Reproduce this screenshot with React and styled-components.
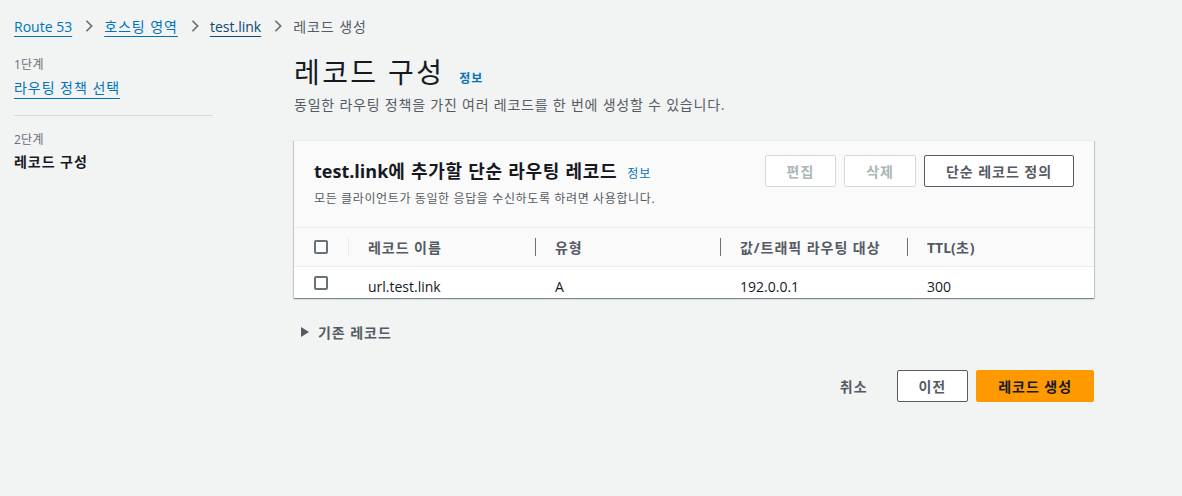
import React from "react";
import styled, { createGlobalStyle } from "styled-components";

const Global = createGlobalStyle`
  html, body { margin: 0; padding: 0; background: #f2f3f3; }
  body { font-family: "Noto Sans CJK KR", "Open Sans", sans-serif; color: #16191f; }
  * { box-sizing: border-box; }
`;

const Page = styled.div`
  width: 1182px;
  height: 496px;
  background: #f2f3f3;
  font-family: "Open Sans", "Noto Sans CJK KR", sans-serif;
  letter-spacing: 0.06em;
  overflow: hidden;
`;

const Latin = styled.span`
  letter-spacing: 0;
`;

const Crumbs = styled.nav`
  display: flex;
  align-items: center;
  height: 52px;
  padding: 0 0 0 14px;
  font-size: 14px;
`;

const CrumbLink = styled.a`
  color: ${(p) => (p.$dark ? "#0a4a74" : "#0073bb")};
  text-decoration: underline;
  text-underline-offset: 4px;
  text-decoration-thickness: 1px;
`;

const CrumbCurrent = styled.span`
  color: #545b64;
`;

const Chevron = styled.svg`
  width: 14px;
  height: 14px;
  margin: 0 8px 0 10px;
  flex-shrink: 0;
`;

const Body = styled.div`
  display: grid;
  grid-template-columns: 294px 800px;
`;

const Side = styled.aside`
  padding: 4px 0 0 14px;
  width: 213px;
`;

const StepLabel = styled.div`
  font-size: 12px;
  color: #687078;
  line-height: 18px;
  letter-spacing: 0.02em;
`;

const StepLink = styled.a`
  display: inline-block;
  font-size: 14px;
  color: #0073bb;
  text-decoration: underline;
  text-underline-offset: 5px;
  margin-top: 3px;
  line-height: 22px;
`;

const StepCurrent = styled.div`
  font-size: 14px;
  font-weight: 700;
  margin-top: 2px;
  line-height: 22px;
`;

const Divider = styled.hr`
  border: none;
  border-top: 1px solid #d5dbdb;
  margin: 16px 0 15px;
  width: 199px;
`;

const Main = styled.main``;

const TitleRow = styled.div`
  display: flex;
  align-items: baseline;
  gap: 15px;
  height: 42px;
`;

const Title = styled.h1`
  margin: 0;
  font-size: 28px;
  font-weight: 400;
  line-height: 40px;
  letter-spacing: 0.085em;
  color: #16191f;
`;

const Info = styled.a`
  font-size: 12px;
  font-weight: ${(p) => (p.$regular ? 400 : 700)};
  color: #0073bb;
  text-decoration: none;
`;

const Subtitle = styled.p`
  margin: 0;
  font-size: 14px;
  color: #545b64;
  line-height: 22px;
  letter-spacing: 0.056em;
`;

const Card = styled.section`
  margin-top: 24px;
  background: #fff;
  box-shadow: 0 1px 1px 0 rgba(0, 28, 36, 0.3), 1px 1px 1px 0 rgba(0, 28, 36, 0.15),
    -1px 1px 1px 0 rgba(0, 28, 36, 0.15);
  border-top: 1px solid #eaeded;
`;

const CardHead = styled.header`
  display: flex;
  justify-content: space-between;
  align-items: flex-start;
  background: #fafafa;
  padding: 14px 20px 0 20px;
  height: 87px;
  border-bottom: 1px solid #eaeded;
`;

const CardTitleRow = styled.div`
  display: flex;
  align-items: baseline;
  gap: 10px;
  margin-top: 3px;
`;

const CardTitle = styled.h2`
  margin: 0;
  font-size: 18px;
  font-weight: 700;
  line-height: 26px;
  letter-spacing: 0.04em;
`;

const CardDesc = styled.p`
  margin: 6px 0 0;
  font-size: 12px;
  color: #545b64;
  line-height: 18px;
  letter-spacing: 0.052em;
`;

const Actions = styled.div`
  display: flex;
  gap: 8px;
`;

const Button = styled.button`
  height: 32px;
  padding: 0 21px;
  background: #fff;
  font-family: inherit;
  letter-spacing: inherit;
  font-size: 14px;
  font-weight: 700;
  border-radius: 2px;
  border: 1px solid ${(p) => (p.$disabled ? "#d5dbdb" : "#545b64")};
  color: ${(p) => (p.$disabled ? "#aab7b8" : "#545b64")};
  cursor: pointer;
`;

const Table = styled.div`
  width: 100%;
`;

const Row = styled.div`
  display: grid;
  grid-template-columns: 54px 187px 185px 187px 1fr;
  align-items: center;
  height: ${(p) => (p.$head ? 39 : 31)}px;
  background: ${(p) => (p.$head ? "#fafafa" : "#fff")};
  border-bottom: ${(p) => (p.$head ? "1px solid #eaeded" : "none")};
  font-size: 14px;
  color: ${(p) => (p.$head ? "#545b64" : "#16191f")};
  font-weight: ${(p) => (p.$head ? 700 : 400)};
`;

const Cell = styled.div`
  position: relative;
  padding-left: 20px;
  height: 100%;
  display: flex;
  align-items: ${(p) => (p.$top ? "flex-start" : "center")};
  padding-top: ${(p) => (p.$top ? 10 : 0)}px;
  letter-spacing: ${(p) => (p.$top ? 0 : "inherit")};
  &::before {
    content: "";
    display: ${(p) => (p.$sep ? "block" : "none")};
    position: absolute;
    left: 0;
    top: 10px;
    bottom: 10px;
    width: 1px;
    background: ${(p) => (p.$sepLight ? "#eaeded" : "#687078")};
  }
`;

const CheckCell = styled.div`
  padding-left: 20px;
  height: 100%;
  display: flex;
  align-items: ${(p) => (p.$top ? "flex-start" : "center")};
  padding-top: ${(p) => (p.$top ? 9 : 0)}px;
`;

const Checkbox = styled.span`
  width: 14px;
  height: 14px;
  border: 2px solid #687078;
  border-radius: 2px;
  background: #fff;
`;

const Expander = styled.div`
  display: flex;
  align-items: center;
  gap: 8px;
  margin-top: 24px;
  padding-left: 6px;
  font-size: 14px;
  font-weight: 700;
  color: #545b64;
`;

const Footer = styled.div`
  display: flex;
  justify-content: flex-end;
  align-items: center;
  gap: 8px;
  margin-top: 28px;
`;

const TextButton = styled.button`
  background: none;
  border: none;
  font-family: inherit;
  letter-spacing: inherit;
  font-size: 14px;
  font-weight: 700;
  color: #545b64;
  padding: 0 20px;
  height: 32px;
  margin-right: 1px;
`;

const Primary = styled.button`
  height: 32px;
  padding: 0 21px;
  background: #ff9900;
  border: 1px solid #ff9900;
  border-radius: 2px;
  font-family: inherit;
  letter-spacing: inherit;
  font-size: 14px;
  font-weight: 700;
  color: #16191f;
`;

const ChevronIcon = () => (
  <Chevron viewBox="0 0 16 16">
    <path d="M5 2l6 6-6 6" fill="none" stroke="#687078" strokeWidth="2" />
  </Chevron>
);

export default function App() {
  return (
    <Page>
      <Global />
      <Crumbs>
        <CrumbLink href="#"><Latin>Route 53</Latin></CrumbLink>
        <ChevronIcon />
        <CrumbLink href="#">호스팅 영역</CrumbLink>
        <ChevronIcon />
        <CrumbLink href="#" $dark><Latin>test.link</Latin></CrumbLink>
        <ChevronIcon />
        <CrumbCurrent>레코드 생성</CrumbCurrent>
      </Crumbs>
      <Body>
        <Side>
          <StepLabel>1단계</StepLabel>
          <StepLink href="#">라우팅 정책 선택</StepLink>
          <Divider />
          <StepLabel>2단계</StepLabel>
          <StepCurrent>레코드 구성</StepCurrent>
        </Side>
        <Main>
          <TitleRow>
            <Title>레코드 구성</Title>
            <Info href="#">정보</Info>
          </TitleRow>
          <Subtitle>동일한 라우팅 정책을 가진 여러 레코드를 한 번에 생성할 수 있습니다.</Subtitle>
          <Card>
            <CardHead>
              <div>
                <CardTitleRow>
                  <CardTitle><Latin>test.link</Latin>에 추가할 단순 라우팅 레코드</CardTitle>
                  <Info href="#" $regular>정보</Info>
                </CardTitleRow>
                <CardDesc>모든 클라이언트가 동일한 응답을 수신하도록 하려면 사용합니다.</CardDesc>
              </div>
              <Actions>
                <Button $disabled>편집</Button>
                <Button $disabled>삭제</Button>
                <Button>단순 레코드 정의</Button>
              </Actions>
            </CardHead>
            <Table>
              <Row $head>
                <CheckCell><Checkbox /></CheckCell>
                <Cell $sep $sepLight>레코드 이름</Cell>
                <Cell $sep>유형</Cell>
                <Cell $sep>값/트래픽 라우팅 대상</Cell>
                <Cell $sep><Latin>TTL(</Latin>초<Latin>)</Latin></Cell>
              </Row>
              <Row>
                <CheckCell $top><Checkbox /></CheckCell>
                <Cell $top>url.test.link</Cell>
                <Cell $top>A</Cell>
                <Cell $top>192.0.0.1</Cell>
                <Cell $top>300</Cell>
              </Row>
            </Table>
          </Card>
          <Expander>
            <svg width="10" height="12" viewBox="0 0 10 12">
              <path d="M1 1l8 5-8 5z" fill="#545b64" />
            </svg>
            기존 레코드
          </Expander>
          <Footer>
            <TextButton>취소</TextButton>
            <Button>이전</Button>
            <Primary>레코드 생성</Primary>
          </Footer>
        </Main>
      </Body>
    </Page>
  );
}
